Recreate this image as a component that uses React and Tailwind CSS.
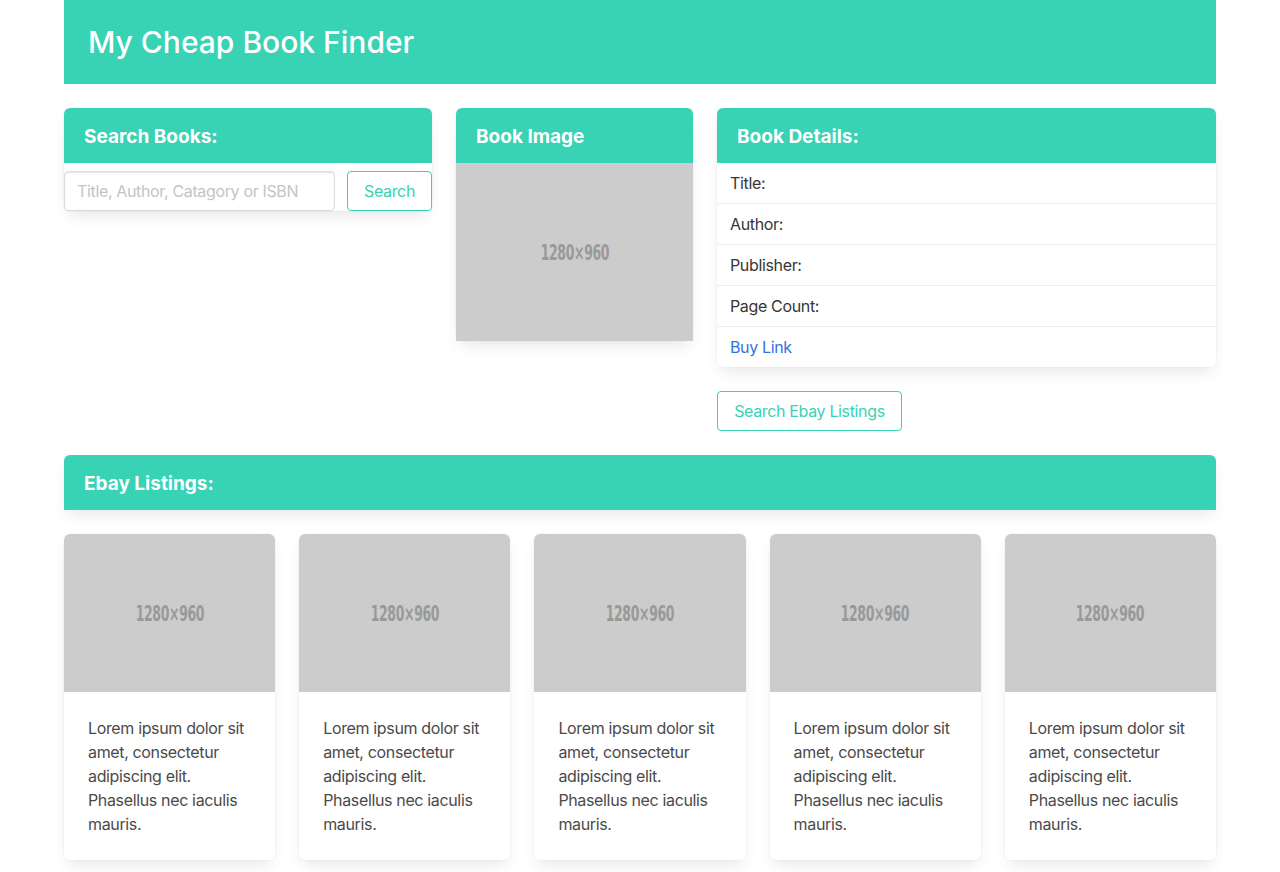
import React from "react";

const font = { fontFamily: "Inter, 'Noto Sans', sans-serif" };

const Placeholder = ({ className }) => (
  <div className={`bg-[#cccccc] flex items-center justify-center pt-1 ${className}`}>
    <span
      className="text-[#999999] text-[21px] font-bold tracking-[-0.5px] scale-x-[0.66]"
      style={{ fontFamily: "'DejaVu Sans Condensed', 'Liberation Sans Narrow', sans-serif" }}
    >
      1280×960
    </span>
  </div>
);

const CardHeader = ({ children }) => (
  <div className="bg-[#38d2b4] h-[55px] flex items-center px-5 pt-[3px] rounded-t-md">
    <h2 className="text-white font-bold text-[19px] tracking-normal">{children}</h2>
  </div>
);

const lorem =
  "Lorem ipsum dolor sit amet, consectetur adipiscing elit. Phasellus nec iaculis mauris.";

export default function App() {
  return (
    <div className="bg-white min-h-screen text-[#4a4a4a] tracking-[-0.35px]" style={font}>
      <div className="w-[1152px] mx-auto">
        <header className="bg-[#38d2b4] h-[84px] flex items-center px-6">
          <h1 className="text-white text-[30px] font-medium tracking-normal">My Cheap Book Finder</h1>
        </header>

        <div className="flex gap-6 mt-6 items-start">
          <div className="w-[368px] rounded-md shadow-[0_8px_16px_-4px_rgba(10,10,10,0.1),0_0_0_1px_rgba(10,10,10,0.02)]">
            <CardHeader>Search Books:</CardHeader>
            <div className="flex gap-3 pt-2">
              <input
                className="w-[271px] h-10 border border-[#dbdbdb] rounded px-3 text-base placeholder:text-[#c4c4c4] shadow-[inset_0_1px_2px_rgba(10,10,10,0.1)]"
                placeholder="Title, Author, Catagory or ISBN"
              />
              <button className="flex-1 h-10 border border-[#38d2b4] rounded text-[#38d2b4] text-base bg-white">
                Search
              </button>
            </div>
          </div>

          <div className="w-[237px] rounded-md shadow-[0_8px_16px_-4px_rgba(10,10,10,0.1),0_0_0_1px_rgba(10,10,10,0.02)]">
            <CardHeader>Book Image</CardHeader>
            <Placeholder className="h-[178px]" />
          </div>

          <div className="flex-1">
            <div className="rounded-md bg-white shadow-[0_8px_16px_-4px_rgba(10,10,10,0.1),0_0_0_1px_rgba(10,10,10,0.02)]">
              <CardHeader>Book Details:</CardHeader>
              <ul className="text-base text-[#363636]">
                {["Title:", "Author:", "Publisher:", "Page Count:"].map((t) => (
                  <li key={t} className="h-[41px] flex items-center px-[13px] border-b border-[#ededed]">
                    {t}
                  </li>
                ))}
                <li className="h-10 flex items-center px-[13px]">
                  <a className="text-[#3273dc]" href="#">Buy Link</a>
                </li>
              </ul>
            </div>
            <button className="mt-6 h-10 w-[185px] border border-[#38d2b4] rounded text-[#38d2b4] text-base bg-white">
              Search Ebay Listings
            </button>
          </div>
        </div>

        <div className="mt-6 rounded-t-md shadow-[0_8px_16px_-4px_rgba(10,10,10,0.1)]">
          <CardHeader>Ebay Listings:</CardHeader>
        </div>

        <div className="grid grid-cols-5 gap-6 mt-6 pb-4">
          {[0, 1, 2, 3, 4].map((i) => (
            <div
              key={i}
              className="rounded-md overflow-hidden bg-white shadow-[0_8px_16px_-4px_rgba(10,10,10,0.1),0_0_0_1px_rgba(10,10,10,0.02)]"
            >
              <Placeholder className="h-[158px]" />
              <p className="p-6 text-base leading-6 text-[#4a4a4a]">{lorem}</p>
            </div>
          ))}
        </div>
      </div>
    </div>
  );
}
